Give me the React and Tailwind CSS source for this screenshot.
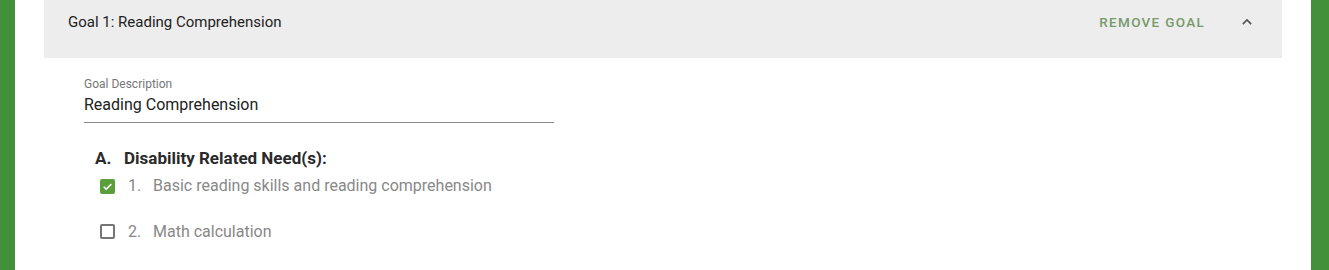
import { useState } from "react";

const needs = [
  { id: 1, label: "Basic reading skills and reading comprehension", checked: true },
  { id: 2, label: "Math calculation", checked: false },
];

const CheckBox = ({ checked, onClick }) => (
  <button
    type="button"
    onClick={onClick}
    className={
      checked
        ? "w-[15px] h-[15px] rounded-[2px] bg-[#5a9f3a] flex items-center justify-center"
        : "w-[15px] h-[15px] rounded-[2px] border-2 border-[#757575] bg-white"
    }
  >
    {checked && (
      <svg viewBox="0 0 24 24" className="w-[13px] h-[13px]" fill="none" stroke="white" strokeWidth="3">
        <path d="M5 12.5l4.5 4.5L19 7.5" />
      </svg>
    )}
  </button>
);

const App = () => {
  const [items, setItems] = useState(needs);

  const toggle = (id) =>
    setItems((prev) => prev.map((i) => (i.id === id ? { ...i, checked: !i.checked } : i)));

  return (
    <div className="w-[1329px] h-[270px] bg-[#43903a] flex font-['Roboto',sans-serif]">
      <div className="ml-[15px] w-[1296px] h-full bg-white px-[29px] overflow-hidden">
        {/* header */}
        <div className="h-[58px] bg-[#ededed] flex items-start pt-[12px] pl-[24px] pr-[25px]">
          <span className="text-[15px] leading-[20px] text-[#222] flex-1">Goal 1: Reading Comprehension</span>
          <span className="text-[13.5px] leading-[20px] font-medium tracking-[1.3px] text-[#779a6b] mr-[32px]">REMOVE GOAL</span>
          <svg viewBox="0 0 24 24" className="w-[20px] h-[20px]" fill="none" stroke="#555" strokeWidth="2">
            <path d="M7 14.5l5-5 5 5" />
          </svg>
        </div>

        {/* body */}
        <div className="pl-[40px] pt-[19px]">
          <div className="w-[470px] border-b border-[#8a8a8a] pb-[7px]">
            <div className="text-[12px] text-[#777] leading-[14px]">Goal Description</div>
            <div className="text-[16px] text-[#222] leading-[20px] mt-[4px]">Reading Comprehension</div>
          </div>

          <div className="pl-[11px] mt-[25px]">
            <div className="flex text-[17px] font-bold text-[#2a2a2a] leading-[20px]">
              <span className="w-[29px]">A.</span>
              <span>Disability Related Need(s):</span>
            </div>
            <div className="mt-[8px] flex flex-col gap-[26px]">
              {items.map((item) => (
                <div key={item.id} className="flex items-center h-[20px] text-[16px] text-[#888]">
                  <div className="w-[33px] pl-[5px]">
                    <CheckBox checked={item.checked} onClick={() => toggle(item.id)} />
                  </div>
                  <span className="w-[25px]">{item.id}.</span>
                  <span>{item.label}</span>
                </div>
              ))}
            </div>
          </div>
        </div>
      </div>
    </div>
  );
};

export default App;
